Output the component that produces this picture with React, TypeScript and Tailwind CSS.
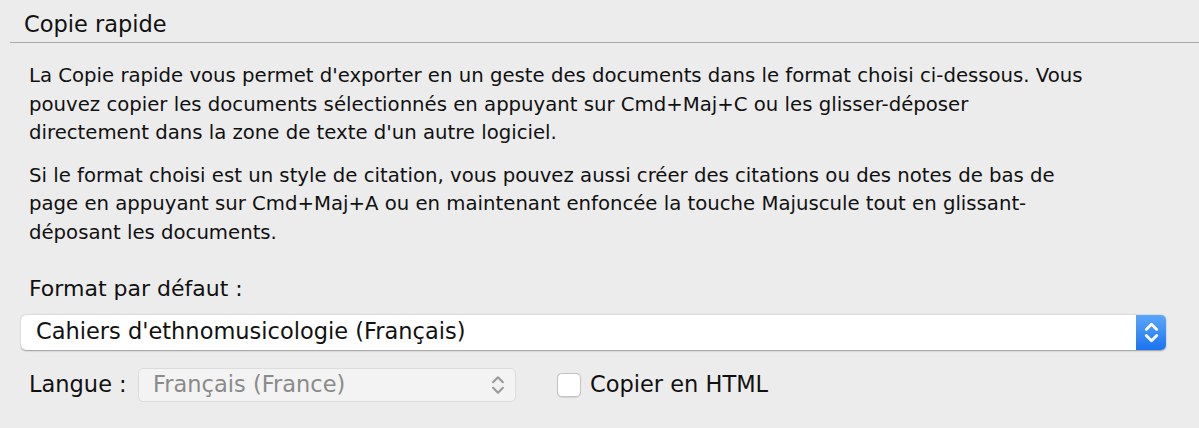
import React from 'react';

const Chevrons: React.FC<{ className?: string; width?: number }> = ({ className, width = 2 }) => (
  <svg viewBox="0 0 12 20" className={className} fill="none" stroke="currentColor" strokeWidth={width} strokeLinecap="round" strokeLinejoin="round">
    <path d="M1.8 7.6 L6 3.4 L10.2 7.6" />
    <path d="M1.8 12.4 L6 16.6 L10.2 12.4" />
  </svg>
);

export default function App() {
  return (
    <div className="w-[1199px] h-[428px] bg-[#ececec] overflow-hidden text-[#111] font-['DejaVu_Sans',sans-serif]">
      <div className="ml-[10px] pl-[14px] pt-[11px] h-[43px] text-[22.5px] leading-[26px] border-b border-[#a9a9a9]">
        Copie rapide
      </div>

      <div className="pl-[29px] pt-[19px] text-[19.7px] leading-[28.5px] whitespace-nowrap">
        <p>
          La Copie rapide vous permet d'exporter en un geste des documents dans le format choisi ci-dessous. Vous<br />
          pouvez copier les documents sélectionnés en appuyant sur Cmd+Maj+C ou les glisser-déposer<br />
          directement dans la zone de texte d'un autre logiciel.
        </p>
        <p className="mt-[14px]">
          Si le format choisi est un style de citation, vous pouvez aussi créer des citations ou des notes de bas de<br />
          page en appuyant sur Cmd+Maj+A ou en maintenant enfoncée la touche Majuscule tout en glissant-<br />
          déposant les documents.
        </p>
        <p className="mt-[28px] text-[22px]">Format par défaut :</p>
      </div>

      <div className="ml-[21px] mt-[11px] w-[1145px] h-[35px] flex rounded-[5px] bg-white shadow-[0_0.5px_1.5px_rgba(0,0,0,0.35)]">
        <div className="flex-1 flex items-center pl-[15px] text-[22.5px]">Cahiers d'ethnomusicologie (Français)</div>
        <div className="w-[30px] h-full rounded-r-[5px] bg-gradient-to-b from-[#5aa7fb] to-[#1a72f0] flex items-center justify-center text-white">
          <Chevrons className="w-[15px] h-[25px]" width={2.2} />
        </div>
      </div>

      <div className="flex items-center mt-[18px] pl-[29px]">
        <span className="text-[22.5px] w-[109px]">Langue :</span>
        <div className="w-[378px] h-[34px] flex items-center justify-between rounded-[5px] bg-[#f3f3f3] border border-[#dcdcdc] pl-[14px] pr-[10px] text-[22.5px] text-[#8a8a8a]">
          <span>Français (France)</span>
          <Chevrons className="w-[14px] h-[24px] text-[#9a9a9a]" width={1.8} />
        </div>
        <div className="ml-[41px] w-[24px] h-[24px] rounded-[5px] bg-white border border-[#c4c4c4] shadow-[0_0.5px_1px_rgba(0,0,0,0.1)]" />
        <span className="ml-[9px] text-[22.5px]">Copier en HTML</span>
      </div>
    </div>
  );
}
